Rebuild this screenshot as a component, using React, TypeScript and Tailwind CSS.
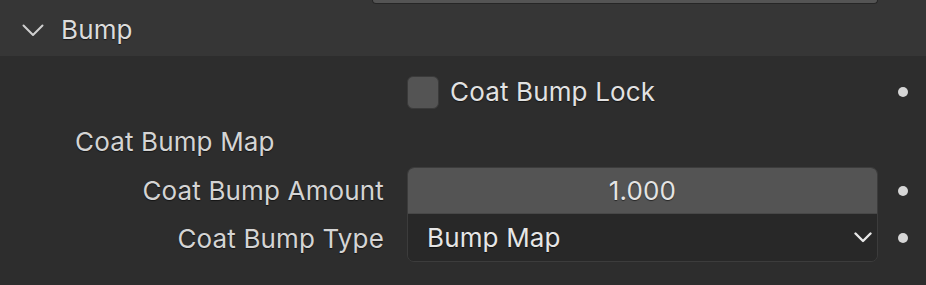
export default function App() {
  const shadow = "[text-shadow:0_1px_1px_rgba(0,0,0,0.55)]";

  return (
    <div className="w-[926px] h-[285px] overflow-hidden bg-[#2d2d2d] font-['Inter','Liberation_Sans',sans-serif] text-[26px] leading-none tracking-[0.15px] text-[#d4d4d4]">
      {/* panel header */}
      <div className="bg-[#363636] h-[56px] flex flex-col">
        <div className="ml-[372px] w-[506px] h-[4px] bg-[#545454] border-x border-b border-[#262626] rounded-b-[6px]" />
        <div className="flex items-center flex-1">
          <svg className="ml-[22px] w-[22px] h-[13px]" viewBox="0 0 22 13" fill="none">
            <path d="M1.5 1.5 L11 11 L20.5 1.5" stroke="#cfcfcf" strokeWidth="2" strokeLinecap="round" strokeLinejoin="round" />
          </svg>
          <span className={`ml-[17px] text-[#dcdcdc] ${shadow}`}>Bump</span>
        </div>
      </div>

      {/* body */}
      <div className="flex flex-col pt-[12px]">
        <div className="flex items-center h-[48px]">
          <div className="w-[407px]" />
          <div className="w-[32px] h-[33px] rounded-[6px] bg-[#545454] border border-[#3a3a3a]" />
          <span className={`ml-[11px] w-[428px] text-[#e2e2e2] ${shadow}`}>Coat Bump Lock</span>
          <div className="ml-[20px] w-[10px] h-[10px] rounded-full bg-[#d6d6d6]" />
        </div>

        <div className="flex items-center h-[51px]">
          <span className={`ml-[75px] ${shadow}`}>Coat Bump Map</span>
        </div>

        <div className="flex">
          <div className="w-[384px] flex flex-col items-end">
            <div className={`h-[47px] flex items-center ${shadow}`}>Coat Bump Amount</div>
            <div className={`h-[48px] flex items-center pt-[2px] ${shadow}`}>Coat Bump Type</div>
          </div>
          <div className="ml-[23px] w-[471px] rounded-[7px] border border-[#3c3c3c] overflow-hidden flex flex-col">
            <div className={`h-[46px] bg-[#545454] flex items-center justify-center text-[#e4e4e4] border-b border-[#484848] ${shadow}`}>
              1.000
            </div>
            <div className="h-[47px] bg-[#282828] flex items-center pl-[19px] pr-[5px]">
              <span className={`flex-1 text-[#e6e6e6] ${shadow}`}>Bump Map</span>
              <svg className="w-[18px] h-[11px]" viewBox="0 0 18 11" fill="none">
                <path d="M1.5 1.5 L9 9 L16.5 1.5" stroke="#e8e8e8" strokeWidth="2.4" strokeLinecap="round" strokeLinejoin="round" />
              </svg>
            </div>
          </div>
          <div className="flex flex-col ml-[20px]">
            <div className="h-[47px] flex items-center">
              <div className="w-[10px] h-[10px] rounded-full bg-[#d6d6d6]" />
            </div>
            <div className="h-[48px] flex items-center">
              <div className="w-[10px] h-[10px] rounded-full bg-[#d6d6d6]" />
            </div>
          </div>
        </div>
      </div>
    </div>
  );
}
